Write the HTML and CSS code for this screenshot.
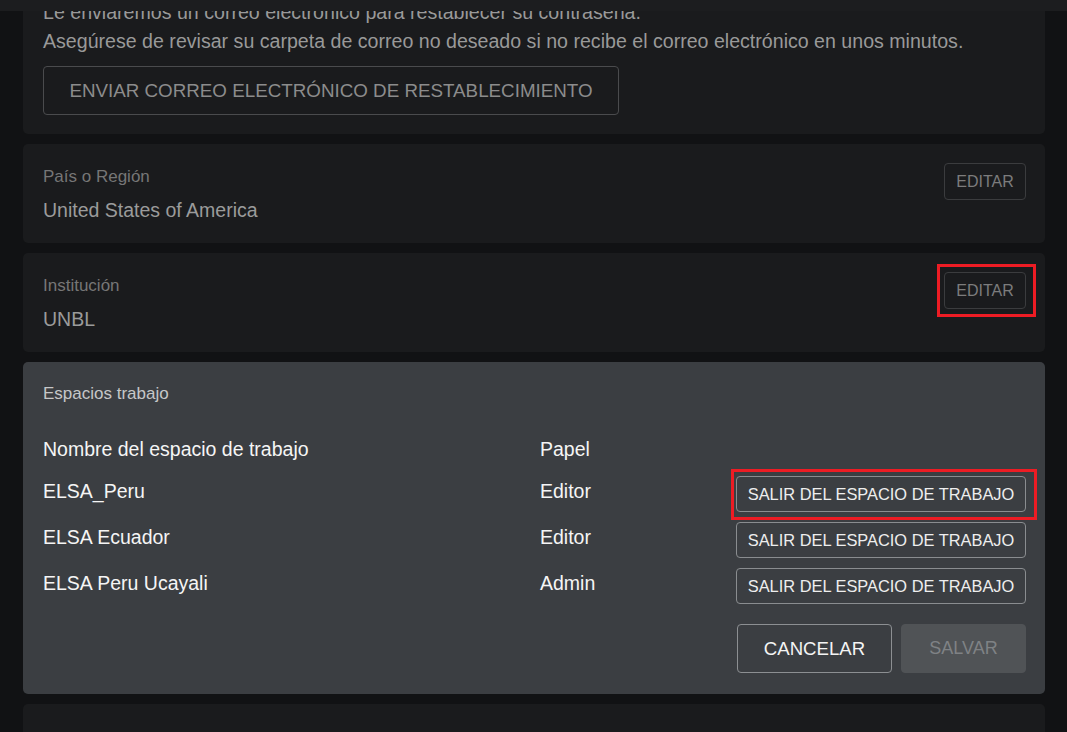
FILE: index.html
```html
<!DOCTYPE html>
<html lang="es">
<head>
<meta charset="utf-8">
<title>Cuenta</title>
<link rel="stylesheet" href="styles.css">
</head>
<body>
<header class="topbar"></header>
<main class="page">
  <section class="card card--password">
    <p class="text">Le enviaremos un correo electrónico para restablecer su contraseña.</p>
    <p class="text">Asegúrese de revisar su carpeta de correo no deseado si no recibe el correo electrónico en unos minutos.</p>
    <button class="btn btn--reset">ENVIAR CORREO ELECTRÓNICO DE RESTABLECIMIENTO</button>
  </section>

  <section class="card card--field">
    <div class="field">
      <div class="field__label">País o Región</div>
      <div class="field__value">United States of America</div>
    </div>
    <button class="btn btn--edit">EDITAR</button>
  </section>

  <section class="card card--field">
    <div class="field">
      <div class="field__label">Institución</div>
      <div class="field__value">UNBL</div>
    </div>
    <button class="btn btn--edit highlight highlight--edit">EDITAR</button>
  </section>

  <section class="card card--active">
    <div class="active__title">Espacios trabajo</div>
    <div class="ws-table">
      <div class="ws-cell">Nombre del espacio de trabajo</div>
      <div class="ws-cell">Papel</div>
      <div></div>

      <div class="ws-cell">ELSA_Peru</div>
      <div class="ws-cell">Editor</div>
      <button class="btn btn--leave highlight highlight--leave">SALIR DEL ESPACIO DE TRABAJO</button>

      <div class="ws-cell">ELSA Ecuador</div>
      <div class="ws-cell">Editor</div>
      <button class="btn btn--leave">SALIR DEL ESPACIO DE TRABAJO</button>

      <div class="ws-cell">ELSA Peru Ucayali</div>
      <div class="ws-cell">Admin</div>
      <button class="btn btn--leave">SALIR DEL ESPACIO DE TRABAJO</button>
    </div>
    <div class="actions">
      <button class="btn btn--cancel">CANCELAR</button>
      <button class="btn btn--save" disabled>SALVAR</button>
    </div>
  </section>

  <section class="card card--field card--last">
    <div class="field">
      <div class="field__label">Acerca de su cuenta</div>
      <div class="field__value">&nbsp;</div>
    </div>
  </section>
</main>
</body>
</html>
```

FILE: styles.css
```css
* { box-sizing: border-box; }

html, body {
  margin: 0;
  padding: 0;
  height: 100%;
  overflow: hidden;
}

body {
  background: #111214;
  font-family: "Liberation Sans", Arial, sans-serif;
  color: #9a9a9a;
}

.topbar {
  position: fixed;
  top: 0;
  left: 0;
  right: 0;
  height: 11px;
  background: #1c1d1f;
  z-index: 10;
}

.page {
  display: flex;
  flex-direction: column;
  gap: 10px;
  padding: 0 22px 0 23px;
  margin-top: -21px;
}

.card {
  background: #1a1b1d;
  border-radius: 5px;
}

.card--password {
  padding: 19px 19px 19px 20px;
}

.text {
  margin: 0;
  font-size: 19.6px;
  line-height: 29px;
  color: #999999;
}

.btn {
  font-family: "Liberation Sans", Arial, sans-serif;
  background: transparent;
  border-radius: 4px;
  cursor: pointer;
  white-space: nowrap;
}

.btn--reset {
  margin-top: 10px;
  height: 49px;
  width: 576px;
  padding: 0;
  font-size: 18.8px;
  color: #8c8c8c;
  border: 1px solid #4a4b4d;
}

.card--field {
  display: flex;
  justify-content: space-between;
  align-items: flex-start;
  padding: 19px 19px 21px 20px;
}

.card--last {
  padding-top: 21px;
}

.field__label {
  margin-top: 4px;
  font-size: 17px;
  line-height: 20px;
  color: #767676;
}

.field__value {
  margin-top: 11px;
  font-size: 19.5px;
  line-height: 24px;
  color: #9b9b9b;
}

.btn--edit {
  height: 37px;
  width: 82px;
  padding: 0;
  font-size: 16px;
  color: #7c7c7c;
  border: 1px solid #3b3c3e;
}

.card--active {
  background: #3b3e42;
  padding: 22px 19px 21px 20px;
}

.active__title {
  font-size: 17px;
  line-height: 20px;
  color: #c6c7c8;
}

.ws-table {
  margin-top: 30px;
  display: grid;
  grid-template-columns: 497px 1fr auto;
  grid-template-rows: 32px 36px 36px 36px;
  row-gap: 10px;
}

.ws-cell {
  margin-top: 3px;
  font-size: 19.5px;
  line-height: 24px;
  color: #f5f5f5;
}

.btn--leave {
  height: 36px;
  width: 290px;
  padding: 0;
  font-size: 16.4px;
  color: #eeeeee;
  border: 1px solid #8a8d90;
}

.actions {
  margin-top: 20px;
  display: flex;
  justify-content: flex-end;
  gap: 9px;
}

.btn--cancel {
  height: 49px;
  width: 155px;
  padding: 0;
  font-size: 18.6px;
  color: #f4f4f4;
  border: 1px solid #8c8f92;
}

.btn--save {
  height: 49px;
  width: 125px;
  padding: 0;
  font-size: 18px;
  color: #7f8285;
  background: #505356;
  border: 1px solid #505356;
  cursor: default;
}

/* red annotation frames drawn over the buttons */
.highlight {
  position: relative;
}

.highlight::after {
  content: "";
  position: absolute;
  border: 3px solid #ed1c24;
  pointer-events: none;
}

.highlight--edit::after {
  top: -9px;
  bottom: -9px;
  left: -8px;
  right: -11px;
}

.highlight--leave::after {
  top: -8px;
  bottom: -9px;
  left: -6px;
  right: -12px;
}
```
